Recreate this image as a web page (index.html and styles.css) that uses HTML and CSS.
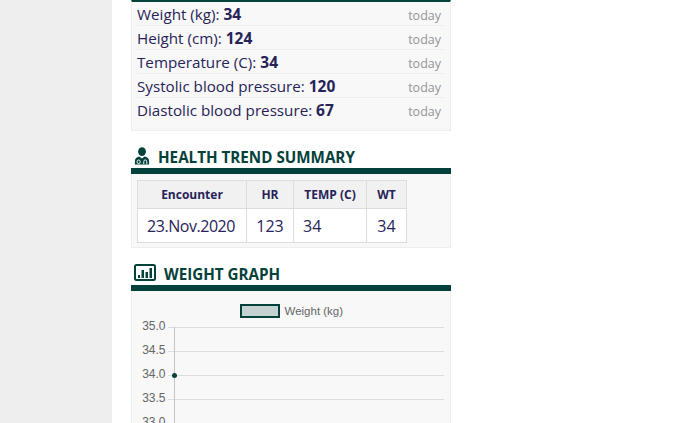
FILE: index.html
```html
<!DOCTYPE html>
<html lang="en">
<head>
<meta charset="utf-8">
<title>Health summary</title>
<link rel="stylesheet" href="styles.css">
</head>
<body>
<div class="page">
  <aside class="gutter"></aside>
  <main class="column">
    <section class="panel vitals">
      <ul class="vital-list">
        <li class="vital"><span>Weight (kg): <b>34</b></span><span class="when">today</span></li>
        <li class="vital"><span>Height (cm): <b>124</b></span><span class="when">today</span></li>
        <li class="vital"><span>Temperature (C): <b>34</b></span><span class="when">today</span></li>
        <li class="vital"><span>Systolic blood pressure: <b>120</b></span><span class="when">today</span></li>
        <li class="vital"><span>Diastolic blood pressure: <b>67</b></span><span class="when">today</span></li>
      </ul>
    </section>

    <h2 class="heading">
      <svg class="icon-doctor" width="16" height="18" viewBox="0 0 18 18" preserveAspectRatio="none" aria-hidden="true">
        <circle cx="9" cy="4.600" r="4.400" fill="#04413a"/>
        <path d="M1 17.500v-3.200C1 11.600 3.200 9.800 6 9.600l3 2 3-2c2.800.2 5 2 5 4.700v3.200z" fill="#04413a"/>
        <circle cx="5.200" cy="14.800" r="1.800" fill="none" stroke="#fff" stroke-width="1"/>
        <path d="M11 17v-2.400a1.700 1.700 0 0 1 3.400 0V17" fill="none" stroke="#fff" stroke-width="1"/>
      </svg>
      <span>HEALTH TREND SUMMARY</span>
    </h2>
    <section class="panel trend">
      <table class="trend-table">
        <thead>
          <tr><th class="c-enc">Encounter</th><th class="c-hr">HR</th><th class="c-temp">TEMP (C)</th><th class="c-wt">WT</th></tr>
        </thead>
        <tbody>
          <tr><td class="center tight">23.Nov.2020</td><td class="center">123</td><td>34</td><td class="center">34</td></tr>
        </tbody>
      </table>
    </section>

    <h2 class="heading">
      <svg class="icon-chart" width="22" height="17" viewBox="0 0 22 17" aria-hidden="true">
        <rect x="1" y="1" width="20" height="15" rx="1.500" fill="none" stroke="#04413a" stroke-width="2"/>
        <rect x="4" y="11" width="2" height="3" fill="#04413a"/>
        <rect x="7.500" y="6" width="2.500" height="8" fill="#04413a"/>
        <rect x="11.500" y="8" width="2.500" height="6" fill="#04413a"/>
        <rect x="15.500" y="4" width="2.500" height="10" fill="#04413a"/>
      </svg>
      <span>WEIGHT GRAPH</span>
    </h2>
    <section class="panel graph">
      <svg class="chart" width="318" height="140" viewBox="0 0 318 140">
        <rect x="109" y="14" width="38" height="12" fill="#c4d3d1" stroke="#04413a" stroke-width="2"/>
        <text class="legend" x="152.500" y="24">Weight (kg)</text>
        <g class="grid">
          <line x1="36" x2="312" y1="36.500" y2="36.500"/>
          <line x1="36" x2="312" y1="60.500" y2="60.500"/>
          <line x1="36" x2="312" y1="84.500" y2="84.500"/>
          <line x1="36" x2="312" y1="108.500" y2="108.500"/>
          <line x1="36" x2="312" y1="132.500" y2="132.500"/>
          <line class="axis" x1="42.500" x2="42.500" y1="36" y2="140"/>
        </g>
        <g class="ticks">
          <text x="33.500" y="39">35.0</text>
          <text x="33.500" y="63">34.5</text>
          <text x="33.500" y="87">34.0</text>
          <text x="33.500" y="111">33.5</text>
          <text x="33.500" y="135">33.0</text>
        </g>
        <circle cx="42.500" cy="84.500" r="2.500" fill="#04413a"/>
      </svg>
    </section>
  </main>
</div>
</body>
</html>
```

FILE: styles.css
```css
html, body {
  margin: 0;
  padding: 0;
  height: 100%;
  overflow: hidden;
  background: #fff;
}

.page {
  display: flex;
  height: 423px;
  overflow: hidden;
  font-family: "Open Sans", sans-serif;
  color: #272357;
}

.gutter {
  width: 112px;
  flex: none;
  background: #eeeeee;
}

.column {
  width: 320px;
  margin-left: 19px;
  flex: none;
}

.panel {
  background: #f8f8f8;
  border: 1px solid #eeeeee;
  border-top: 0;
  box-sizing: border-box;
}

.vitals {
  border-top: 2px solid #04413a;
  height: 131px;
  padding: 0 5px;
}

.vital-list {
  list-style: none;
  margin: 0;
  padding: 0;
}

.vital {
  display: flex;
  justify-content: space-between;
  height: 24px;
  box-sizing: border-box;
  border-bottom: 1px solid #eeeeee;
  font-size: 15.200px;
  line-height: 25px;
  padding-right: 4px;
}

.vital:last-child {
  border-bottom: 0;
}

.vital b {
  font-size: 15.500px;
  font-weight: 700;
}

.when {
  font-size: 12.500px;
  line-height: 27px;
  color: #959595;
}

.heading {
  display: flex;
  align-items: flex-end;
  margin: 0;
  height: 43px;
  box-sizing: border-box;
  border-bottom: 6px solid #04413a;
  padding: 0 0 0 3px;
  font-size: 15.200px;
  font-weight: 700;
  color: #04413a;
  line-height: 22px;
}

.icon-doctor {
  margin: 0 8px 3px 0;
}

.icon-chart {
  margin: 0 8px 4px 0;
}

.trend {
  height: 74px;
  padding: 6px 5px 0;
}

.trend-table {
  border-collapse: collapse;
  width: 269px;
  table-layout: fixed;
}

.trend-table th,
.trend-table td {
  border: 1px solid #dddddd;
}

.trend-table th {
  background: #f1f1f1;
  font-size: 12px;
  font-weight: 700;
  height: 27px;
  padding: 0;
  text-align: center;
}

.trend-table td {
  background: #fff;
  font-size: 16px;
  font-weight: 500;
  height: 33px;
  padding: 0 0 0 9px;
}

.trend-table td.center {
  text-align: center;
  padding: 0;
}

.trend-table td.tight {
  letter-spacing: -0.450px;
  padding-right: 2px;
}

.c-enc { width: 108px; }
.c-hr { width: 46px; }
.c-temp { width: 72px; }
.c-wt { width: 39px; }

.graph {
  height: 140px;
  overflow: hidden;
}

.chart {
  display: block;
}

.chart text {
  font-family: "Liberation Sans", sans-serif;
  font-size: 12px;
  fill: #666666;
}

.chart .legend {
  font-size: 11.500px;
}

.ticks text {
  text-anchor: end;
}

.grid line {
  stroke: #dddddd;
  stroke-width: 1;
}

.grid .axis {
  stroke: #c4c4c4;
}
```
